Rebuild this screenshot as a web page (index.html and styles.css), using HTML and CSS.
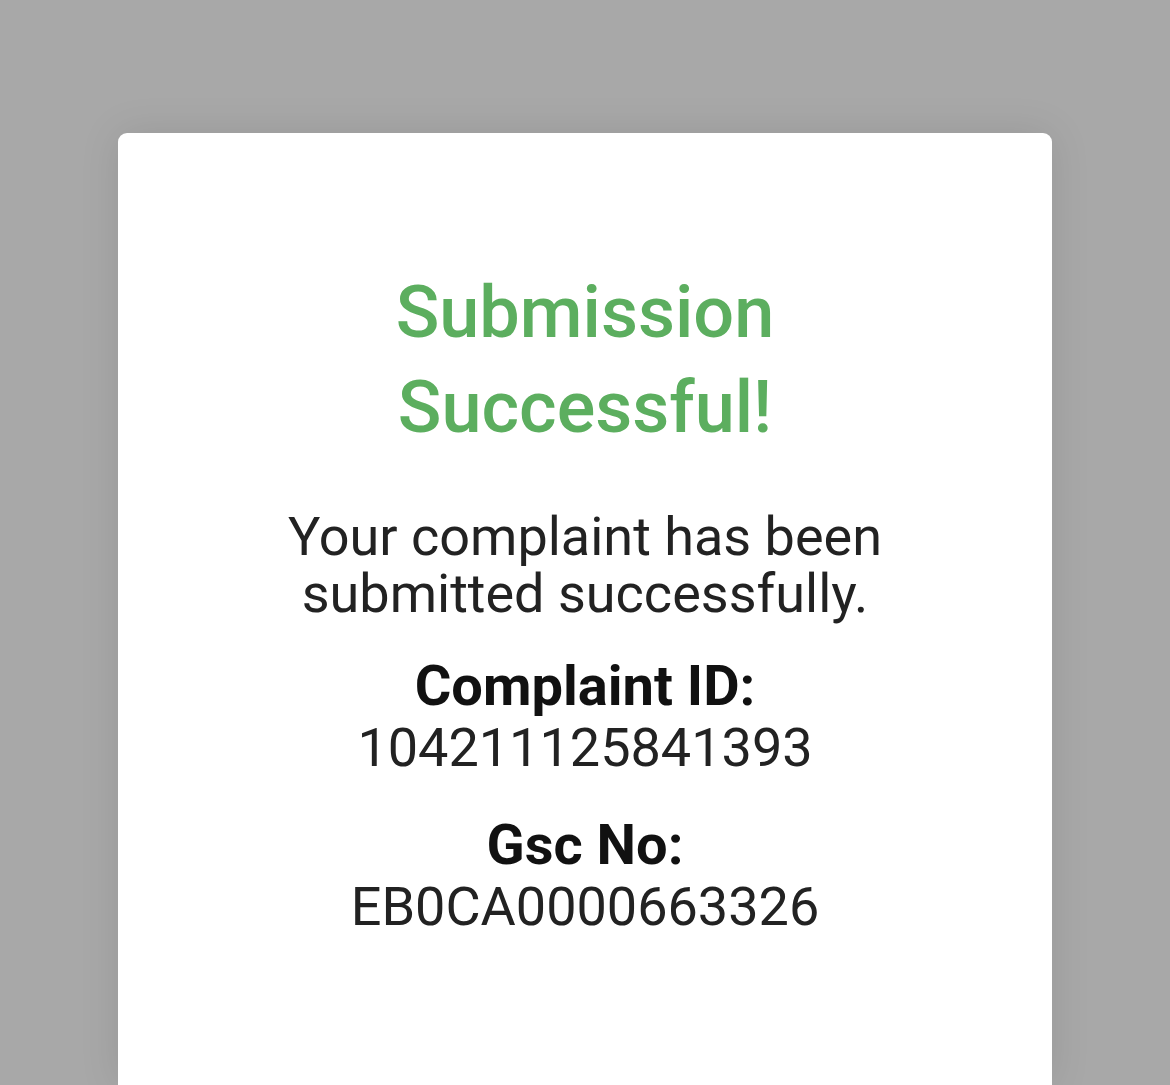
FILE: index.html
```html
<!DOCTYPE html>
<html>
<head>
<meta charset="utf-8">
<link rel="stylesheet" href="styles.css">
</head>
<body>
<div class="screen">
  <div class="card">
    <h1 class="title">Submission<br>Successful!</h1>
    <p class="message">Your complaint has been<br>submitted successfully.</p>
    <div class="field">
      <div class="label">Complaint ID:</div>
      <div class="value">104211125841393</div>
    </div>
    <div class="field field-next">
      <div class="label">Gsc No:</div>
      <div class="value">EB0CA0000663326</div>
    </div>
  </div>
</div>
</body>
</html>
```

FILE: styles.css
```css
html, body {
  margin: 0;
  padding: 0;
  height: 100%;
  overflow: hidden;
}
body {
  background: #a8a8a8;
  font-family: Roboto, "Liberation Sans", sans-serif;
}
.screen {
  padding: 133px 118px 0 118px;
  height: 100%;
  box-sizing: border-box;
}
.card {
  background: #ffffff;
  border-radius: 9px 9px 0 0;
  height: 952px;
  box-shadow: 0 0 40px rgba(0,0,0,0.10);
  display: flex;
  flex-direction: column;
  align-items: center;
  text-align: center;
  padding-top: 132px;
  box-sizing: border-box;
}
.title {
  margin: 0;
  color: #5cae5f;
  font-weight: 500;
  font-size: 72px;
  line-height: 95px;
}
.message {
  margin: 53px 0 0 0;
  color: #222222;
  font-size: 54px;
  line-height: 57px;
  font-weight: 400;
}
.field {
  margin-top: 34px;
}
.field-next {
  margin-top: 37px;
}
.label {
  color: #111111;
  font-weight: 700;
  font-size: 56px;
  line-height: 61px;
}
.value {
  color: #222222;
  font-size: 54px;
  line-height: 61px;
}
```
